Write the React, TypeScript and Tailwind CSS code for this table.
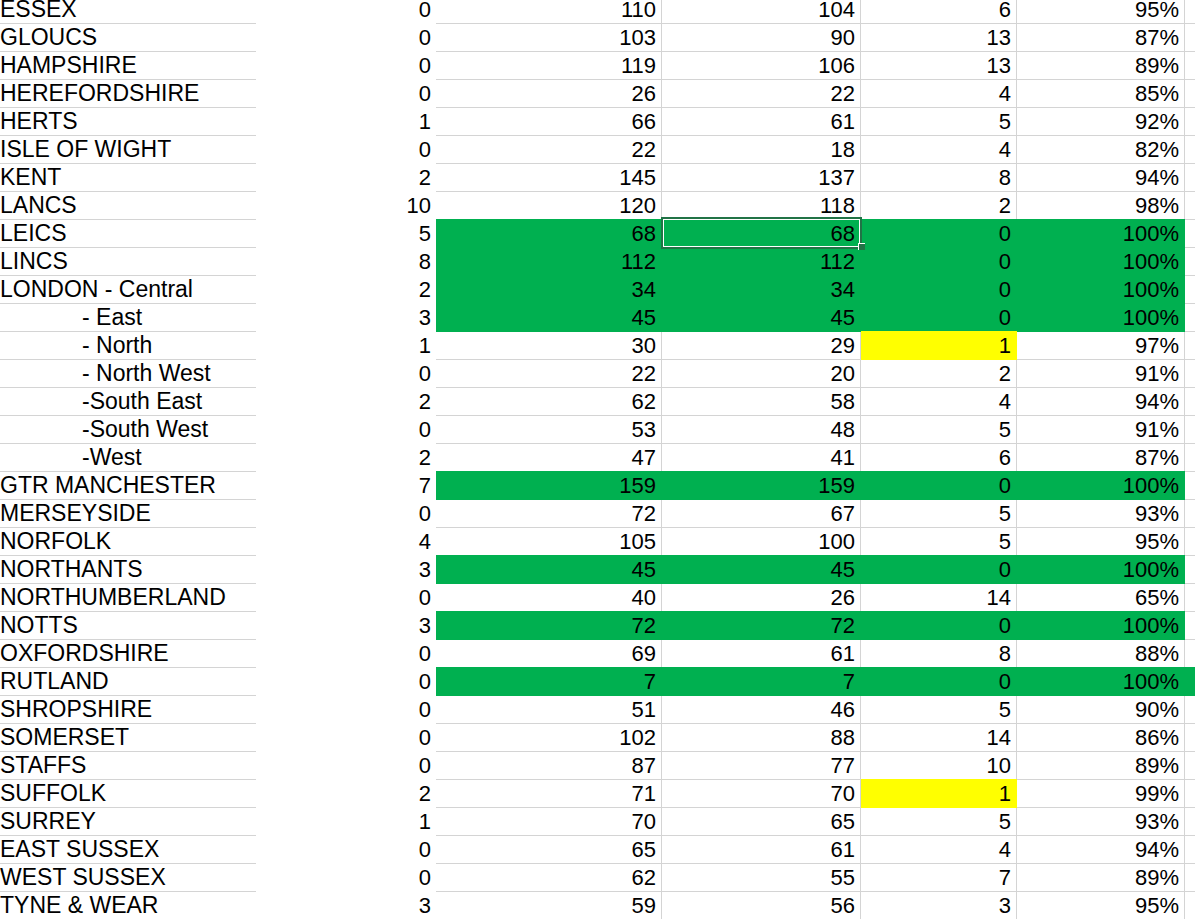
import React from "react";

type Fill = "none" | "green" | "yellowE";
type Row = {
  label: string;
  sub?: boolean;
  v: [string, string, string, string, string];
  fill?: Fill;
  full?: boolean;
};

const rows: Row[] = [
  { label: "ESSEX", v: ["0", "110", "104", "6", "95%"] },
  { label: "GLOUCS", v: ["0", "103", "90", "13", "87%"] },
  { label: "HAMPSHIRE", v: ["0", "119", "106", "13", "89%"] },
  { label: "HEREFORDSHIRE", v: ["0", "26", "22", "4", "85%"] },
  { label: "HERTS", v: ["1", "66", "61", "5", "92%"] },
  { label: "ISLE OF WIGHT", v: ["0", "22", "18", "4", "82%"] },
  { label: "KENT", v: ["2", "145", "137", "8", "94%"] },
  { label: "LANCS", v: ["10", "120", "118", "2", "98%"] },
  { label: "LEICS", v: ["5", "68", "68", "0", "100%"], fill: "green" },
  { label: "LINCS", v: ["8", "112", "112", "0", "100%"], fill: "green" },
  { label: "LONDON - Central", v: ["2", "34", "34", "0", "100%"], fill: "green" },
  { label: "- East", sub: true, v: ["3", "45", "45", "0", "100%"], fill: "green" },
  { label: "- North", sub: true, v: ["1", "30", "29", "1", "97%"], fill: "yellowE" },
  { label: "- North West", sub: true, v: ["0", "22", "20", "2", "91%"] },
  { label: "-South East", sub: true, v: ["2", "62", "58", "4", "94%"] },
  { label: "-South West", sub: true, v: ["0", "53", "48", "5", "91%"] },
  { label: "-West", sub: true, v: ["2", "47", "41", "6", "87%"] },
  { label: "GTR MANCHESTER", v: ["7", "159", "159", "0", "100%"], fill: "green" },
  { label: "MERSEYSIDE", v: ["0", "72", "67", "5", "93%"] },
  { label: "NORFOLK", v: ["4", "105", "100", "5", "95%"] },
  { label: "NORTHANTS", v: ["3", "45", "45", "0", "100%"], fill: "green" },
  { label: "NORTHUMBERLAND", v: ["0", "40", "26", "14", "65%"] },
  { label: "NOTTS", v: ["3", "72", "72", "0", "100%"], fill: "green" },
  { label: "OXFORDSHIRE", v: ["0", "69", "61", "8", "88%"] },
  { label: "RUTLAND", v: ["0", "7", "7", "0", "100%"], fill: "green", full: true },
  { label: "SHROPSHIRE", v: ["0", "51", "46", "5", "90%"] },
  { label: "SOMERSET", v: ["0", "102", "88", "14", "86%"] },
  { label: "STAFFS", v: ["0", "87", "77", "10", "89%"] },
  { label: "SUFFOLK", v: ["2", "71", "70", "1", "99%"], fill: "yellowE" },
  { label: "SURREY", v: ["1", "70", "65", "5", "93%"] },
  { label: "EAST SUSSEX", v: ["0", "65", "61", "4", "94%"] },
  { label: "WEST SUSSEX", v: ["0", "62", "55", "7", "89%"] },
  { label: "TYNE & WEAR", v: ["3", "59", "56", "3", "95%"] },
];

const plain = "border-r border-b border-[#d4d4d4] bg-white";
const green = "border-r border-b border-[#00b050] bg-[#00b050] shadow-[0_-1px_0_#00b050]";
const yellow = "border-r border-b border-[#ffff00] bg-[#ffff00] shadow-[0_-1px_0_#ffff00]";

function Cell({ w, cls, children, extra }: { w: string; cls: string; children?: React.ReactNode; extra?: React.ReactNode }) {
  return (
    <div className={`relative h-[28px] shrink-0 text-right pr-[5px] ${w} ${cls}`}>
      {children}
      {extra}
    </div>
  );
}

export default function App() {
  return (
    <div
      className="w-[1195px] h-[919px] overflow-hidden bg-white text-black text-[22px] leading-[27px]"
      style={{ fontFamily: '"Liberation Sans", Arial, sans-serif' }}
    >
      <div className="-mt-[4px] flex flex-col">
        {rows.map((r, i) => {
          const isGreen = r.fill === "green";
          const cCls = isGreen ? green : plain;
          const eCls = isGreen ? green : r.fill === "yellowE" ? yellow : plain;
          const gCls = r.full
            ? "border-b border-[#00b050] bg-[#00b050] shadow-[0_-1px_0_#00b050]"
            : "border-b border-[#d4d4d4] bg-white";
          return (
            <div key={i} className="flex h-[28px] whitespace-nowrap">
              <div
                className={`h-[28px] w-[256px] shrink-0 border-b border-[#d4d4d4] text-[23px] leading-[27px] ${r.sub ? "pl-[82px]" : "pl-0"}`}
              >
                {r.label}
              </div>
              <div className="h-[28px] w-[180px] shrink-0 bg-white pr-[5px] text-right">{r.v[0]}</div>
              <Cell w="w-[226px]" cls={cCls}>
                {r.v[1]}
              </Cell>
              <Cell
                w="w-[199px]"
                cls={cCls}
                extra={
                  i === 8 ? (
                    <div className="absolute -left-px -top-[3px] z-10 h-[32px] w-[201px] border-2 border-[#217346] shadow-[inset_0_0_0_1px_#ffffff]">
                      <div className="absolute left-[195px] top-[24px] h-[7px] w-[7px] border-l border-t border-white bg-[#217346]" />
                    </div>
                  ) : null
                }
              >
                {r.v[2]}
              </Cell>
              <Cell w="w-[156px]" cls={eCls}>
                {r.v[3]}
              </Cell>
              <Cell w="w-[168px]" cls={cCls}>
                {r.v[4]}
              </Cell>
              <div className={`h-[28px] flex-1 ${gCls}`} />
            </div>
          );
        })}
      </div>
    </div>
  );
}
